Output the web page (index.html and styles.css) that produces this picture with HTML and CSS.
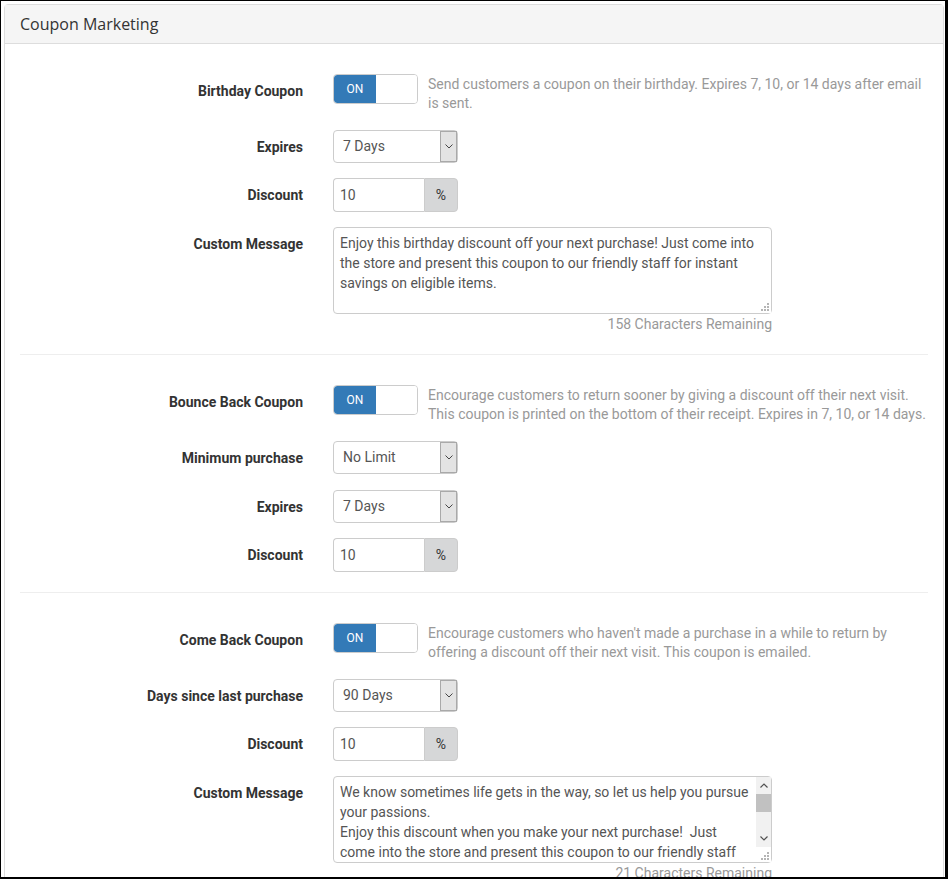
FILE: index.html
```html
<!DOCTYPE html>
<html lang="en">
<head>
    <meta charset="UTF-8">
    <title>Coupon Marketing</title>
    <link rel="stylesheet" href="styles.css">
</head>
<body>
    <div class="frame">
        <div class="panel">
            <div class="panel-heading">Coupon Marketing</div>
            <div class="panel-body">

                <!-- Birthday coupon -->
                <div class="form-group">
                    <label class="control-label">Birthday Coupon</label>
                    <div class="toggle-row">
                        <div class="switch"><span class="switch-on">ON</span><span class="switch-off"></span></div>
                        <p class="help">Send customers a coupon on their birthday. Expires 7, 10, or 14 days after email is sent.</p>
                    </div>
                </div>
                <div class="form-group">
                    <label class="control-label">Expires</label>
                    <div class="select-box">
                        <span class="select-value">7 Days</span>
                        <span class="select-arrow"><svg width="8" height="5" viewBox="0 0 8 5"><path d="M0.5 0.5 L4 4 L7.5 0.5" fill="none" stroke="#444" stroke-width="1"/></svg></span>
                    </div>
                </div>
                <div class="form-group">
                    <label class="control-label">Discount</label>
                    <div class="input-group">
                        <input type="text" value="10">
                        <span class="addon">%</span>
                    </div>
                </div>
                <div class="form-group">
                    <label class="control-label">Custom Message</label>
                    <div class="message">
                        <div class="textarea-wrap">
                            <textarea>Enjoy this birthday discount off your next purchase! Just come into the store and present this coupon to our friendly staff for instant savings on eligible items.</textarea>
                        </div>
                        <div class="remaining">158 Characters Remaining</div>
                    </div>
                </div>

                <hr>

                <!-- Bounce back coupon -->
                <div class="form-group">
                    <label class="control-label">Bounce Back Coupon</label>
                    <div class="toggle-row">
                        <div class="switch"><span class="switch-on">ON</span><span class="switch-off"></span></div>
                        <p class="help">Encourage customers to return sooner by giving a discount off their next visit. This coupon is printed on the bottom of their receipt. Expires in 7, 10, or 14 days.</p>
                    </div>
                </div>
                <div class="form-group">
                    <label class="control-label">Minimum purchase</label>
                    <div class="select-box">
                        <span class="select-value">No Limit</span>
                        <span class="select-arrow"><svg width="8" height="5" viewBox="0 0 8 5"><path d="M0.5 0.5 L4 4 L7.5 0.5" fill="none" stroke="#444" stroke-width="1"/></svg></span>
                    </div>
                </div>
                <div class="form-group tight">
                    <label class="control-label">Expires</label>
                    <div class="select-box">
                        <span class="select-value">7 Days</span>
                        <span class="select-arrow"><svg width="8" height="5" viewBox="0 0 8 5"><path d="M0.5 0.5 L4 4 L7.5 0.5" fill="none" stroke="#444" stroke-width="1"/></svg></span>
                    </div>
                </div>
                <div class="form-group">
                    <label class="control-label">Discount</label>
                    <div class="input-group">
                        <input type="text" value="10">
                        <span class="addon">%</span>
                    </div>
                </div>

                <hr>

                <!-- Come back coupon -->
                <div class="form-group">
                    <label class="control-label">Come Back Coupon</label>
                    <div class="toggle-row">
                        <div class="switch"><span class="switch-on">ON</span><span class="switch-off"></span></div>
                        <p class="help">Encourage customers who haven't made a purchase in a while to return by offering a discount off their next visit. This coupon is emailed.</p>
                    </div>
                </div>
                <div class="form-group">
                    <label class="control-label">Days since last purchase</label>
                    <div class="select-box">
                        <span class="select-value">90 Days</span>
                        <span class="select-arrow"><svg width="8" height="5" viewBox="0 0 8 5"><path d="M0.5 0.5 L4 4 L7.5 0.5" fill="none" stroke="#444" stroke-width="1"/></svg></span>
                    </div>
                </div>
                <div class="form-group">
                    <label class="control-label">Discount</label>
                    <div class="input-group">
                        <input type="text" value="10">
                        <span class="addon">%</span>
                    </div>
                </div>
                <div class="form-group">
                    <label class="control-label">Custom Message</label>
                    <div class="message">
                        <div class="textarea-wrap">
                            <textarea class="has-scroll">We know sometimes life gets in the way, so let us help you pursue your passions.
Enjoy this discount when you make your next purchase!  Just come into the store and present this coupon to our friendly staff for instant savings on eligible items.
We miss you and look forward to seeing you again soon!
Thank you for being a loyal customer.</textarea>
                            <div class="scrollbar">
                                <span class="scroll-btn"><svg width="8" height="5" viewBox="0 0 8 5"><path d="M0.5 4.5 L4 1 L7.5 4.5" fill="none" stroke="#505050" stroke-width="1.2"/></svg></span>
                                <span class="scroll-track"><span class="scroll-thumb"></span></span>
                                <span class="scroll-btn"><svg width="8" height="5" viewBox="0 0 8 5"><path d="M0.5 0.5 L4 4 L7.5 0.5" fill="none" stroke="#505050" stroke-width="1.2"/></svg></span>
                            </div>
                        </div>
                        <div class="remaining">21 Characters Remaining</div>
                    </div>
                </div>

            </div>
        </div>
    </div>
</body>
</html>
```

FILE: styles.css
```css
html, body {
    margin: 0;
    padding: 0;
    background: #fff;
}

body {
    font-family: 'Roboto', sans-serif;
    font-size: 14px;
    color: #333;
}

.frame {
    height: 879px;
    box-sizing: border-box;
    border-style: solid;
    border-color: #000;
    border-width: 1px 3px 2px 1px;
    padding: 3px 1px 0 3px;
    overflow: hidden;
}

.panel {
    border: 1px solid #ddd;
    border-radius: 4px 4px 0 0;
}

.panel-heading {
    background: #f5f5f5;
    border-bottom: 1px solid #ddd;
    padding: 9px 15px;
    line-height: 20px;
    font-family: 'Open Sans', sans-serif;
    font-size: 16px;
    color: #333;
}

.panel-body {
    padding: 30px 15px 0;
}

.form-group {
    display: grid;
    grid-template-columns: 283px 1fr;
    column-gap: 30px;
    margin-bottom: 15px;
}

.form-group.tight {
    margin-top: 16px;
}

.control-label {
    text-align: right;
    font-weight: bold;
    padding-top: 7px;
    line-height: 20px;
}

/* switch + help */
.toggle-row {
    display: flex;
    align-items: flex-start;
    gap: 10px;
}

.switch {
    flex: none;
    display: flex;
    width: 83px;
    height: 28px;
    border: 1px solid #ccc;
    border-radius: 4px;
    overflow: hidden;
}

.switch-on {
    width: 42px;
    background: #337ab7;
    color: #fff;
    font-size: 12px;
    line-height: 28px;
    text-align: center;
    border-radius: 3px 0 0 3px;
}

.switch-off {
    flex: 1;
    background: #fff;
}

.help {
    margin: 0;
    padding: 1px 0 2px;
    line-height: 19px;
    color: #999;
}

/* select */
.select-box {
    position: relative;
    width: 123px;
    height: 31px;
    border: 1px solid #ccc;
    border-radius: 4px;
    color: #555;
}

.select-value {
    display: block;
    padding-left: 9px;
    line-height: 31px;
}

.select-arrow {
    position: absolute;
    top: 0;
    right: 0;
    width: 15px;
    height: 29px;
    border: 1px solid #a9a9a9;
    background: #e3e3e3;
    display: flex;
    align-items: center;
    justify-content: center;
}

/* input + addon */
.input-group {
    display: flex;
    width: 125px;
    height: 34px;
}

.input-group input {
    width: 91px;
    box-sizing: border-box;
    border: 1px solid #ccc;
    border-right: none;
    border-radius: 4px 0 0 4px;
    padding: 0 6px;
    font-family: 'Roboto', sans-serif;
    font-size: 14px;
    color: #555;
    outline: none;
}

.input-group .addon {
    flex: 1;
    background: #d6d7d8;
    border: 1px solid #ccc;
    border-radius: 0 4px 4px 0;
    text-align: center;
    line-height: 32px;
    font-size: 14px;
    color: #333;
}

/* textarea */
.message {
    width: 439px;
}

.textarea-wrap {
    position: relative;
}

.textarea-wrap textarea {
    display: block;
    width: 100%;
    height: 87px;
    box-sizing: border-box;
    border: 1px solid #ccc;
    border-radius: 4px;
    padding: 5px 6px;
    font-family: 'Roboto', sans-serif;
    font-size: 14px;
    line-height: 20px;
    color: #555;
}

.textarea-wrap textarea.has-scroll {
    padding-right: 21px;
    overflow: hidden;
}

.textarea-wrap textarea::-webkit-resizer {
    background-color: #fff;
    background-repeat: no-repeat;
    background-size: 2px 2px;
    background-image:
        radial-gradient(#999 0.6px, transparent 1px),
        radial-gradient(#999 0.6px, transparent 1px),
        radial-gradient(#999 0.6px, transparent 1px),
        radial-gradient(#999 0.6px, transparent 1px),
        radial-gradient(#999 0.6px, transparent 1px),
        radial-gradient(#999 0.6px, transparent 1px);
    background-position: 11px 11px, 8px 11px, 5px 11px, 11px 8px, 8px 8px, 11px 5px;
}

/* fake classic scrollbar over the textarea */
.scrollbar {
    position: absolute;
    top: 1px;
    right: 1px;
    bottom: 16px;
    width: 15px;
    background: #f1f1f1;
    display: flex;
    flex-direction: column;
}

.scroll-btn {
    height: 17px;
    display: flex;
    align-items: center;
    justify-content: center;
}

.scroll-track {
    flex: 1;
}

.scroll-thumb {
    display: block;
    height: 18px;
    background: #c1c1c1;
}

.remaining {
    text-align: right;
    color: #999;
    line-height: 20px;
}

hr {
    border: none;
    border-top: 1px solid #eee;
    margin: 20px 0 30px;
}
```
